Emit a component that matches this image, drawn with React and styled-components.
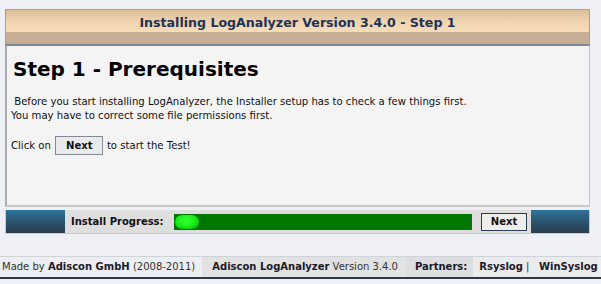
import React from 'react'
import styled, { createGlobalStyle } from 'styled-components';

const Global = createGlobalStyle`
    body {
        margin: 0;
        background: #eef0f5;
        font-family: 'DejaVu Sans', Verdana, sans-serif;
        font-size: 10px;
        color: #111;
    }
`

function App() {
    return (
        <Page>
            <Global />
            <Panel>
                <Header>
                    <HeaderTop>Installing LogAnalyzer Version 3.4.0 - Step 1</HeaderTop>
                    <HeaderBottom />
                </Header>
                <Content>
                    <StepTitle>Step 1 - Prerequisites</StepTitle>
                    <Text>&nbsp;Before you start installing LogAnalyzer, the Installer setup has to check a few things first.<br />
                        You may have to correct some file permissions first.</Text>
                    <Text>Click on <InlineButton>Next</InlineButton> to start the Test!</Text>
                </Content>
                <ProgressRow>
                    <BlueCell />
                    <Label>Install Progress:</Label>
                    <Bar>
                        <Blob />
                    </Bar>
                    <ButtonCell><NextButton>Next</NextButton></ButtonCell>
                    <BlueCell $grow />
                </ProgressRow>
            </Panel>
            <Footer>
                <FootCell $pad="0 7px 0 2px">Made by <Link>Adiscon GmbH</Link> (2008-2011)</FootCell>
                <FootCell $pad="0 8px 0 10px" $shade="#e2e2e2"><Link>Adiscon LogAnalyzer</Link> Version 3.4.0</FootCell>
                <FootCell $pad="0 6px 0 9px" $shade="#dedede"><b>Partners:</b></FootCell>
                <FootCell $pad="0 0 0 6px" $shade="#ebebeb"><Link>Rsyslog</Link>&nbsp;|&nbsp;&nbsp;&nbsp;<Link>WinSyslog</Link></FootCell>
                <Filler />
            </Footer>
        </Page>
    );
}

const Page = styled.div`
    padding-top: 9px;
    width: 601px;
`

const Panel = styled.div`
    margin: 0 11px 0 5px;
`

const Header = styled.div`
    border: 1px solid #9aa3ab;
    border-bottom: 2px solid #7d8790;
`

const HeaderTop = styled.div`
    height: 22px;
    line-height: 25px;
    text-align: center;
    font-size: 12.6px;
    font-weight: bold;
    color: #1c3358;
    background: linear-gradient(180deg, #d9bd99 0%, #efd2ae 50%, #f8dcb8 100%);
`

const HeaderBottom = styled.div`
    height: 12px;
    background: #c6ae94;
`

const Content = styled.div`
    background: #f4f4f4;
    border-left: 2px solid #a9adb2;
    border-right: 1px solid #c4c8cc;
    border-bottom: 2px solid #c8c8c8;
    height: 161px;
    padding: 11px 8px 0 4px;
    box-sizing: border-box;
`

const StepTitle = styled.h1`
    margin: 0 0 14px 2px;
    font-size: 20px;
    font-weight: bold;
    color: #000;
`

const Text = styled.p`
    margin: 0 0 13px 0;
    line-height: 14px;
    font-size: 10.1px;
    color: #111;
`

const InlineButton = styled.span`
    display: inline-block;
    padding: 1px 9px 1px 10px;
    margin: 0 1px;
    border: 1px solid #7f8a96;
    background: #eaeaea;
    font-weight: bold;
    line-height: 15px;
`

const ProgressRow = styled.div`
    display: flex;
    align-items: stretch;
    height: 23px;
    margin-top: 3px;
    border: 1px solid #c9cbcf;
    border-top: none;
    background: #dedede;
`

const BlueCell = styled.div`
    width: 59px;
    flex: ${p => (p.$grow ? 1 : 'none')};
    background: linear-gradient(180deg, #2f7399 0%, #2a5470 50%, #2b3d4c 100%);
`

const Label = styled.div`
    width: 108px;
    flex: none;
    padding-left: 6px;
    box-sizing: border-box;
    line-height: 23px;
    font-weight: bold;
    color: #111;
    font-size: 10px;
`

const Bar = styled.div`
    width: 300px;
    flex: none;
    box-sizing: border-box;
    margin: 3px 0 2px 0;
    background: #007800;
    border: 1px solid #dcdcdc;
    position: relative;
`

const Blob = styled.div`
    position: absolute;
    left: 1px;
    top: 1px;
    width: 24px;
    height: 14px;
    border-radius: 7px;
    background: radial-gradient(ellipse at 45% 40%, #33ff33 0%, #19ee19 50%, #0a9a0a 100%);
`

const ButtonCell = styled.div`
    width: 58px;
    flex: none;
    padding-left: 8px;
    box-sizing: border-box;
    display: flex;
    align-items: center;
`

const NextButton = styled.span`
    display: inline-block;
    width: 44px;
    height: 16px;
    line-height: 16px;
    text-align: center;
    border: 1px solid #2c3e55;
    background: #f0eeea;
    font-weight: bold;
    color: #111;
`

const Footer = styled.div`
    display: flex;
    margin-top: 22px;
    height: 20px;
    border-top: 1px solid #cfd3da;
    border-bottom: 2px solid #2b3848;
`

const FootCell = styled.div`
    background: ${p => p.$shade || '#eceef2'};
    padding: ${p => p.$pad};
    line-height: 20px;
    white-space: nowrap;
    color: #333;
    b {
        color: #1a1a2a;
    }
`

const Link = styled.b`
    color: #4f1a1a;
`

const Filler = styled.div`
    flex: 1;
    background: #eceef2;
`

export default App
